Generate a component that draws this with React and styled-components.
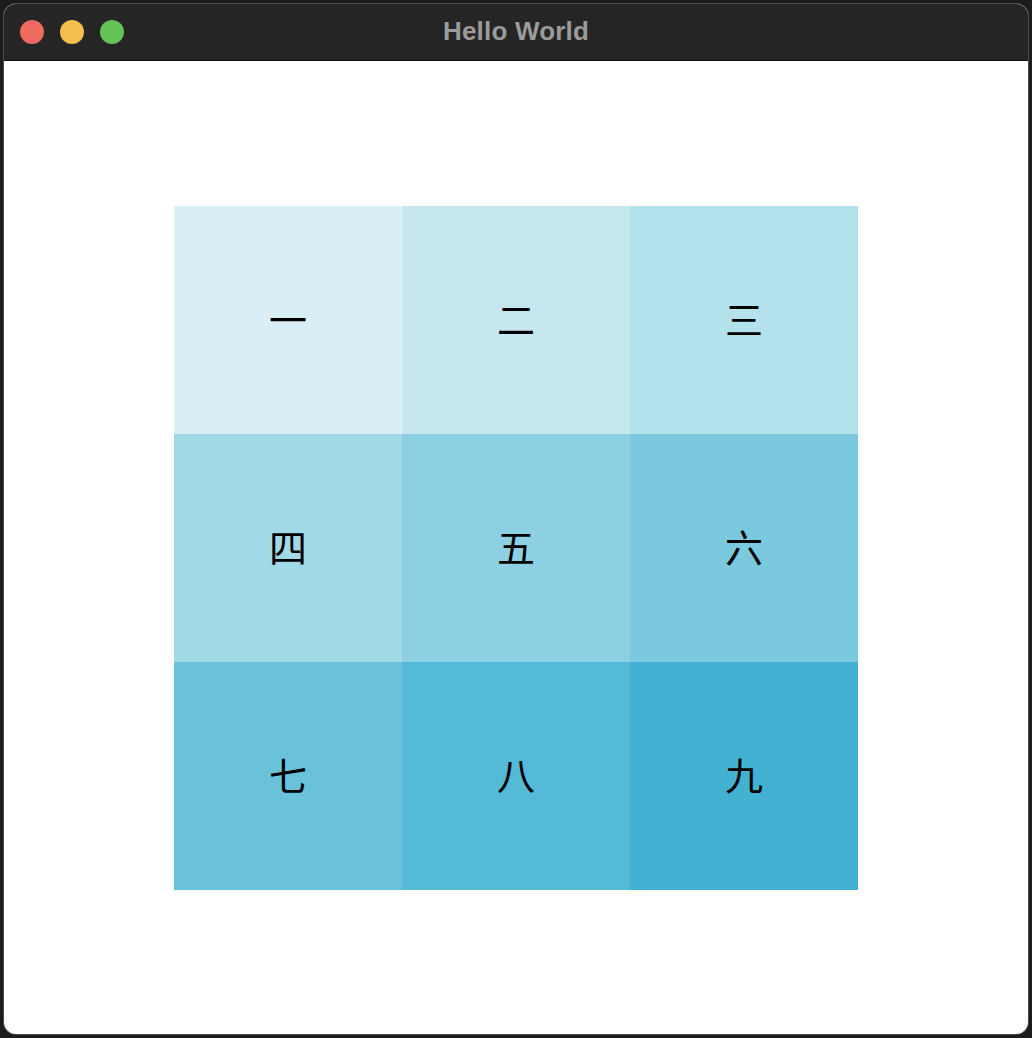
import React from 'react';
import styled, { createGlobalStyle } from 'styled-components';

const numerals = ['一', '二', '三', '四', '五', '六', '七', '八', '九'];

const colors = [
  '#d9eff5', '#c6e7f0', '#b3e1ec',
  '#a1d9e7', '#8dd0e3', '#7bc9df',
  '#69c2da', '#55bad7', '#43b2d2',
];

const GlobalStyle = createGlobalStyle`
  html, body {
    margin: 0;
    padding: 0;
    background: #1c1c1c;
  }
  body {
    font-family: "Liberation Sans", Arial, sans-serif;
  }
`;

function App() {
  return (
    <>
      <GlobalStyle />
      <Desktop>
        <Window>
          <TitleBar>
            <Lights>
              <Light color="#ee6a5f" />
              <Light color="#f5bf4f" />
              <Light color="#61c454" />
            </Lights>
            <Title>Hello World</Title>
          </TitleBar>
          <Content>
            <Grid>
              {numerals.map((n, i) => (
                <Cell key={n} bg={colors[i]}>{n}</Cell>
              ))}
            </Grid>
          </Content>
        </Window>
      </Desktop>
    </>
  );
}

const Desktop = styled.div`
  width: 1032px;
  height: 1038px;
  padding: 4px;
  box-sizing: border-box;
  background: #1c1c1c;
`;

const Window = styled.div`
  height: 100%;
  display: flex;
  flex-direction: column;
  border-radius: 12px;
  overflow: hidden;
  background: #ffffff;
  box-shadow: 0 0 0 1px #4a4a4a;
`;

const TitleBar = styled.div`
  position: relative;
  height: 56px;
  flex-shrink: 0;
  display: flex;
  align-items: center;
  justify-content: center;
  background: #252525;
  border-bottom: 1px solid #0d0d0d;
`;

const Lights = styled.div`
  position: absolute;
  left: 16px;
  top: 16px;
  display: flex;
  gap: 16px;
`;

const Light = styled.span`
  width: 24px;
  height: 24px;
  border-radius: 50%;
  background: ${p => p.color};
`;

const Title = styled.div`
  color: #9b9b9b;
  font-family: "Liberation Sans", Arial, sans-serif;
  font-weight: 700;
  font-size: 26px;
  letter-spacing: 0.2px;
  margin-top: -2px;
`;

const Content = styled.div`
  flex: 1;
  display: flex;
  align-items: center;
  justify-content: center;
`;

const Grid = styled.div`
  display: grid;
  grid-template-columns: repeat(3, 228px);
  grid-template-rows: repeat(3, 228px);
  margin-top: 1px;
`;

const Cell = styled.div`
  display: flex;
  align-items: center;
  justify-content: center;
  padding-bottom: 6px;
  box-sizing: border-box;
  background: ${p => p.bg};
  color: #000;
  font-family: "Noto Sans CJK SC", "Noto Sans CJK JP", sans-serif;
  font-size: 38px;
`;

export default App;
